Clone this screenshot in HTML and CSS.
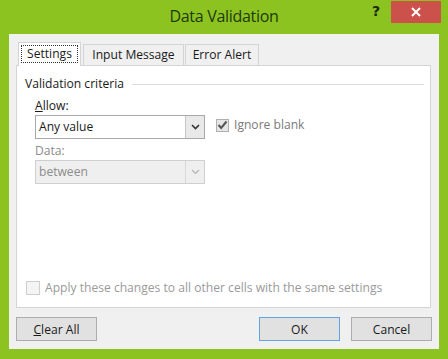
FILE: index.html
```html
<!DOCTYPE html>
<html>
<head>
<meta charset="utf-8">
<link rel="stylesheet" href="styles.css">
</head>
<body>
<div class="window">
  <div class="titlebar">
    <div class="title">Data Validation</div>
    <div class="help">?</div>
    <div class="close">
      <svg width="12" height="12" viewBox="0 0 12 12"><path d="M2 2 L10 10 M10 2 L2 10" stroke="#fff" stroke-width="2" fill="none"/></svg>
    </div>
  </div>
  <div class="client">
    <div class="tabs">
      <div class="tab active"><span class="focus">Settings</span></div>
      <div class="tab tab-input">Input Message</div>
      <div class="tab tab-error">Error Alert</div>
    </div>
    <div class="panel">
      <div class="group-title"><span>Validation criteria</span><div class="rule"></div></div>
      <div class="criteria">
        <div class="fields">
          <div class="label"><u>A</u>llow:</div>
          <div class="combo">
            <div class="combo-value">Any value</div>
            <div class="combo-btn">
              <svg width="9" height="6" viewBox="0 0 9 6"><path d="M1 1 L4.5 4.5 L8 1" stroke="#333" stroke-width="1.6" fill="none"/></svg>
            </div>
          </div>
          <div class="label label-data disabled">Data:</div>
          <div class="combo combo-disabled">
            <div class="combo-value">between</div>
            <div class="combo-btn">
              <svg width="9" height="6" viewBox="0 0 9 6"><path d="M1 1 L4.5 4.5 L8 1" stroke="#b4b4b4" stroke-width="1.2" fill="none"/></svg>
            </div>
          </div>
        </div>
        <div class="check check-ignore">
          <div class="box checked">
            <svg width="11" height="10" viewBox="0 0 11 10"><path d="M1.5 5 L4.2 8 L9.5 1.5" stroke="#555" stroke-width="2" fill="none"/></svg>
          </div>
          <span class="check-text">Ignore blank</span>
        </div>
      </div>
      <div class="check check-apply">
        <div class="box box-disabled"></div>
        <span class="check-text">Apply these changes to all other cells with the same settings</span>
      </div>
    </div>
    <div class="buttons">
      <div class="btn"><u>C</u>lear All</div>
      <div class="btn-group">
        <div class="btn btn-default">OK</div>
        <div class="btn">Cancel</div>
      </div>
    </div>
  </div>
</div>
</body>
</html>
```

FILE: styles.css
```css
html, body {
  margin: 0;
  padding: 0;
}
body {
  background: #8cc320;
  font-family: "Open Sans", "Noto Sans", "DejaVu Sans", sans-serif;
  font-size: 12.1px;
  color: #1a1a1a;
}
.window {
  width: 448px;
  height: 359px;
  background: #8cc320;
  display: flex;
  flex-direction: column;
}
.titlebar {
  position: relative;
  height: 34px;
  flex: none;
}
.title {
  text-align: center;
  font-size: 16px;
  line-height: 20px;
  padding-top: 6px;
  color: #1d3a0c;
  letter-spacing: -0.3px;
}
.help {
  position: absolute;
  left: 372px;
  top: 3px;
  font-weight: bold;
  font-size: 14px;
  color: #1a2a0a;
  font-family: "DejaVu Sans", sans-serif;
}
.close {
  position: absolute;
  left: 391px;
  top: 1px;
  width: 50px;
  height: 22px;
  background: #cd514b;
  display: flex;
  align-items: center;
  justify-content: center;
}
.client {
  margin: 0 9px 10px 9px;
  height: 315px;
  background: #f0f0f0;
  padding: 8px 8px 0 7px;
  box-sizing: border-box;
  display: flex;
  flex-direction: column;
}
.tabs {
  display: flex;
  align-items: flex-end;
  height: 23px;
  padding-left: 2px;
  flex: none;
}
.tab {
  height: 21px;
  box-sizing: border-box;
  border: 1px solid #d4d4d4;
  border-bottom: none;
  background: #f0f0f0;
  display: flex;
  align-items: center;
  justify-content: center;
  color: #1a1a1a;
  line-height: 16px;
}
.tab.active {
  height: 24px;
  width: 63px;
  margin-bottom: -1px;
  margin-right: 2px;
  background: #fff;
  position: relative;
  z-index: 1;
  align-items: flex-start;
  padding-top: 2px;
}
.focus {
  display: block;
  width: 57px;
  height: 18px;
  box-sizing: border-box;
  border: 1px dotted #333;
  text-align: center;
  line-height: 16px;
}
.tab-input {
  width: 101px;
  margin-right: 1px;
}
.tab-error {
  width: 74px;
}
.panel {
  background: #fff;
  border: 1px solid #d4d4d4;
  height: 243px;
  box-sizing: border-box;
  padding: 10px 6px 11px 8px;
  display: flex;
  flex-direction: column;
}
.group-title {
  display: flex;
  align-items: center;
  height: 16px;
  line-height: 16px;
}
.rule {
  flex: 1;
  height: 1px;
  background: #dcdcdc;
  margin-left: 8px;
}
.criteria {
  display: flex;
  align-items: flex-start;
  padding-left: 10px;
  margin-top: 6px;
  flex: 1;
}
.fields {
  width: 170px;
  display: flex;
  flex-direction: column;
}
.label {
  height: 16px;
  line-height: 16px;
  margin-bottom: 1px;
}
.label-data {
  margin-top: 4px;
}
.disabled {
  color: #8c8c8c;
}
.combo {
  height: 24px;
  box-sizing: border-box;
  border: 1px solid #a9a9a9;
  background: #fff;
  display: flex;
}
.combo-value {
  flex: 1;
  padding-left: 3px;
  line-height: 22px;
}
.combo-btn {
  width: 18px;
  border-left: 1px solid #c6c6c6;
  background: #e9e9e9;
  display: flex;
  align-items: center;
  justify-content: center;
}
.combo-disabled {
  border-color: #cfcfcf;
  background: #efefef;
  color: #8c8c8c;
}
.combo-disabled .combo-btn {
  background: #efefef;
  border-left-color: #d8d8d8;
}
.check {
  display: flex;
  align-items: center;
}
.check-ignore {
  margin-left: 11px;
  margin-top: 19px;
}
.box {
  width: 13px;
  height: 13px;
  box-sizing: border-box;
  border: 1px solid #b0b0b0;
  background: #e6e6e6;
  display: flex;
  align-items: center;
  justify-content: center;
  flex: none;
}
.check-text {
  margin-left: 5px;
  color: #7a7a7a;
  line-height: 16px;
}
.check-apply {
  padding-left: 1px;
}
.box-disabled {
  width: 14px;
  height: 14px;
  border-color: #cfcfcf;
  background: #f4f4f4;
}
.check-apply .check-text {
  color: #9a9a9a;
}
.buttons {
  display: flex;
  justify-content: space-between;
  margin-top: 9px;
  margin-right: -1px;
}
.btn-group {
  display: flex;
  gap: 11px;
}
.btn {
  width: 81px;
  height: 24px;
  box-sizing: border-box;
  border: 1px solid #adadad;
  background: #e1e1e1;
  display: flex;
  align-items: center;
  justify-content: center;
  color: #1a1a1a;
}
.btn-default {
  border-color: #5ea4e6;
}
```
